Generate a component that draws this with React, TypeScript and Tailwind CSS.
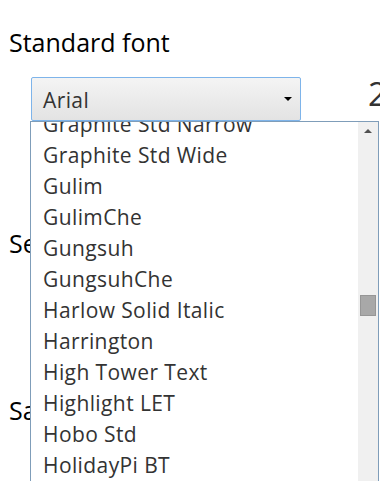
import React from "react";

const fonts = [
  "Graphite Std Narrow",
  "Graphite Std Wide",
  "Gulim",
  "GulimChe",
  "Gungsuh",
  "GungsuhChe",
  "Harlow Solid Italic",
  "Harrington",
  "High Tower Text",
  "Highlight LET",
  "Hobo Std",
  "HolidayPi BT",
  "Impact",
];

function FakeSelect({ value }: { value: string }) {
  return (
    <div className="shrink-0 ml-[31px] w-[270px] h-[44px] flex items-center justify-between pl-[11px] pr-[8px] pt-[3px] rounded-[2px] border border-[#7eb4ea] bg-gradient-to-b from-[#f4f4f4] to-[#e3e3e3] text-[21px] tracking-[0.4px] text-[#333]">
      <span>{value}</span>
      <span className="-mt-[3px] w-0 h-0 border-l-[4px] border-r-[4px] border-t-[4px] border-l-transparent border-r-transparent border-t-black" />
    </div>
  );
}

export default function App() {
  return (
    <div
      className="relative h-[481px] w-[380px] overflow-hidden bg-white"
      style={{ fontFamily: '"Open Sans", "Noto Sans", sans-serif' }}
    >
      {/* Standard font */}
      <div className="pt-[25px] pl-[9px] text-[25px] leading-[34px] text-black">Standard font</div>
      <div className="mt-[18px] flex items-start">
        <FakeSelect value="Arial" />
        <span className="shrink-0 ml-[67px] -mt-[5px] text-[33px] leading-[44px] text-[#333] whitespace-nowrap">20</span>
      </div>

      {/* Serif font */}
      <div className="mt-[105px] pl-[9px] text-[25px] leading-[34px] text-black">Serif font</div>
      <div className="mt-[18px] flex">
        <FakeSelect value="Times New Roman" />
      </div>

      {/* Sans-serif font */}
      <div className="mt-[71px] pl-[9px] text-[25px] leading-[34px] text-black">Sans-serif font</div>

      {/* Open dropdown list */}
      <div className="absolute left-[30px] top-[121px] w-[349px] h-[380px] flex border border-[#7f9db9] bg-white">
        <div className="flex-1 overflow-hidden">
          <div className="-mt-[13px]">
            {fonts.map((f) => (
              <div key={f} className="pl-[12px] text-[21px] tracking-[0.4px] leading-[31px] text-[#333] whitespace-nowrap">
                {f}
              </div>
            ))}
          </div>
        </div>
        <div className="w-[20px] bg-[#f0f0f0] flex flex-col items-center">
          <div className="h-[17px] flex items-center justify-center">
            <span className="w-0 h-0 border-l-[4px] border-r-[4px] border-b-[4px] border-l-transparent border-r-transparent border-b-[#505050]" />
          </div>
          <div className="mt-[156px] w-[16px] h-[21px] bg-[#a8a8a8] border border-[#969696]" />
        </div>
      </div>
    </div>
  );
}
